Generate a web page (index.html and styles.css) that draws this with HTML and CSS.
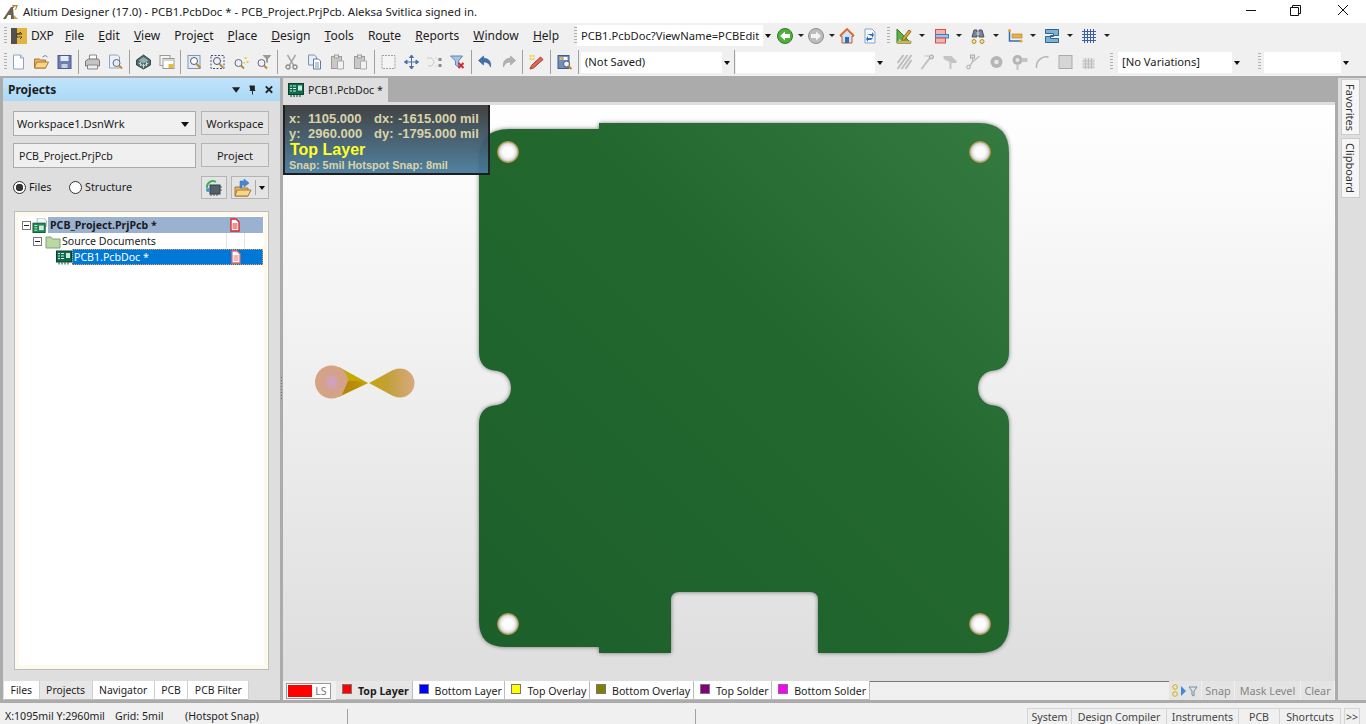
FILE: index.html
```html
<!DOCTYPE html>
<html lang="en">
<head>
    <meta charset="UTF-8">
    <title>Altium Designer (17.0) - PCB1.PcbDoc</title>
    <link rel="stylesheet" href="styles.css">
</head>
<body>
    <!-- icon sheet -->
    <svg class="sheet" width="0" height="0">
        <symbol id="i-new" viewBox="0 0 16 16"><path d="M3 1h7l3 3v11H3z" fill="#fff" stroke="#8ea3c4"/><path d="M10 1v3h3" fill="#dde6f3" stroke="#8ea3c4"/></symbol>
        <symbol id="i-open" viewBox="0 0 16 16"><path d="M1 5h5l1 1h5v8H1z" fill="#e9b765" stroke="#a87b2e"/><path d="M3 8h12l-3 6H1z" fill="#f8d48c" stroke="#a87b2e"/><path d="M9 3q3-3 5 0" fill="none" stroke="#6a86b0"/></symbol>
        <symbol id="i-save" viewBox="0 0 16 16"><rect x="1.500" y="1.500" width="13" height="13" fill="#6f7fb3" stroke="#4c5a8c"/><rect x="4" y="2" width="8" height="5" fill="#e8ecf5"/><rect x="5" y="10" width="6" height="4" fill="#c9cfdf"/></symbol>
        <symbol id="i-print" viewBox="0 0 16 16"><path d="M5 1h7v5H5z" fill="#fff" stroke="#888"/><path d="M1 7l3-2h10l1 2v5H1z" fill="#c4c4c4" stroke="#777"/><path d="M3 11h10v4H3z" fill="#eee" stroke="#888"/></symbol>
        <symbol id="i-preview" viewBox="0 0 16 16"><path d="M2 1h8l2 2v11H2z" fill="#eef2f8" stroke="#8ea3c4"/><circle cx="9" cy="9" r="3.500" fill="#dcecf8" stroke="#667"/><path d="M11.500 11.500l3 3" stroke="#c08a30" stroke-width="2"/></symbol>
        <symbol id="i-3d" viewBox="0 0 16 16"><path d="M8 1l7 5v5l-7 4-7-4V6z" fill="#4f6a6c" stroke="#3a4a4c"/><path d="M8 3l5 3.500-5 3-5-3z" fill="#8fb0ae"/><path d="M3 9l5 3 5-3M5 8v4M8 10v4M11 8v4" stroke="#cfd8d8" fill="none"/></symbol>
        <symbol id="i-sheets" viewBox="0 0 16 16"><rect x="1.500" y="1.500" width="10" height="10" fill="#f5f5f5" stroke="#9a9a9a"/><rect x="4.500" y="4.500" width="11" height="10" fill="#fff" stroke="#9a9a9a"/><rect x="10" y="10" width="5" height="4" fill="#e8b840"/><path d="M5 5h10v2H5z" fill="#d4d4d4"/></symbol>
        <symbol id="i-zoomfit" viewBox="0 0 16 16"><rect x="1.500" y="1.500" width="12" height="13" fill="#e4edf8" stroke="#7e94b8"/><circle cx="7.500" cy="7" r="3.500" fill="#fff" stroke="#556"/><path d="M10 10l4 4" stroke="#b98a36" stroke-width="2"/></symbol>
        <symbol id="i-zoomarea" viewBox="0 0 16 16"><rect x="1.500" y="1.500" width="13" height="13" fill="none" stroke="#3c4a8c" stroke-dasharray="2 1.500"/><circle cx="7.500" cy="7" r="3.500" fill="#eef" stroke="#556"/><path d="M10 10l3.500 3.500" stroke="#b98a36" stroke-width="2"/></symbol>
        <symbol id="i-zoomsel" viewBox="0 0 16 16"><circle cx="6" cy="9" r="3.500" fill="#eef" stroke="#667"/><path d="M8.500 11.500l3 3" stroke="#b98a36" stroke-width="2"/><path d="M12 3h2v2h-2zM14 7h2v2h-2zM11 8h1.500v1.500H11z" fill="#e5c94a"/></symbol>
        <symbol id="i-zoomfilter" viewBox="0 0 16 16"><circle cx="6" cy="9" r="3.500" fill="#eef" stroke="#667"/><path d="M8.500 11.500l3 3" stroke="#b98a36" stroke-width="2"/><path d="M7 1h9l-3.500 4v4L10.500 8V5z" fill="#9a9a9a"/></symbol>
        <symbol id="i-cut" viewBox="0 0 16 16"><path d="M4 1l6 10M12 1L6 11" stroke="#a8a8a8" stroke-width="1.500" fill="none"/><circle cx="4.500" cy="13" r="2" fill="none" stroke="#8a8a8a" stroke-width="1.300"/><circle cx="11.500" cy="13" r="2" fill="none" stroke="#8a8a8a" stroke-width="1.300"/></symbol>
        <symbol id="i-copy" viewBox="0 0 16 16"><path d="M2 1h6l2 2v8H2z" fill="#e8eef6" stroke="#7f93b2"/><path d="M7 5h5l2 2v8H7z" fill="#fff" stroke="#5d7aa4"/><path d="M8.500 9h4M8.500 11h4M8.500 13h4" stroke="#7f93b2"/></symbol>
        <symbol id="i-paste" viewBox="0 0 16 16"><rect x="2" y="2.500" width="10" height="12" fill="#c9c9c9" stroke="#9c9c9c"/><rect x="5" y="1" width="4" height="3" fill="#e4e4e4" stroke="#9c9c9c"/><path d="M8 7h6v8H8z" fill="#f2f2f2" stroke="#aaa"/></symbol>
        <symbol id="i-select" viewBox="0 0 16 16"><rect x="1.500" y="1.500" width="13" height="13" fill="#f4f4f4" stroke="#a0a0a0" stroke-dasharray="2 1"/></symbol>
        <symbol id="i-move" viewBox="0 0 16 16"><path d="M8 1v14M1 8h14M8 1l-2 2.500h4zM8 15l-2-2.500h4zM1 8l2.500-2v4zM15 8l-2.500-2v4z" fill="#4a6ea8" stroke="#4a6ea8"/></symbol>
        <symbol id="i-cross" viewBox="0 0 16 16"><path d="M1 4h4l3 4-3 4H1M9 4h1M9 12h1" fill="none" stroke="#b5b5b5" stroke-dasharray="2 1"/><path d="M12 4l3 0v3h-3zM12 10h3v3h-3z" fill="#8a8a8a"/></symbol>
        <symbol id="i-clearfilter" viewBox="0 0 16 16"><path d="M1 2h12L9 7v6L6 11V7z" fill="#a7c3e4" stroke="#5f86b8"/><path d="M9 9l5 5M14 9l-5 5" stroke="#cf2b2b" stroke-width="2"/></symbol>
        <symbol id="i-undo" viewBox="0 0 16 16"><path d="M6 2L1 6.500 6 11V8q5-.5 7 5 1.500-8-7-9z" fill="#3f6fae" stroke="#2d5488" stroke-width=".6"/></symbol>
        <symbol id="i-redo" viewBox="0 0 16 16"><path d="M10 2l5 4.500L10 11V8q-5-.5-7 5-1.500-8 7-9z" fill="#b2b2b2" stroke="#9a9a9a" stroke-width=".6"/></symbol>
        <symbol id="i-pencil" viewBox="0 0 16 16"><path d="M12 3l2.500 2.500L5 14l-3.500 1L3 11.500z" fill="#dc6a5a" stroke="#a83a30"/><path d="M1 1h2v2H1zM4 1h2v2H4zM1 4h2v2H1zM4 4h2v2H4z" fill="#f2d14a"/></symbol>
        <symbol id="i-library" viewBox="0 0 16 16"><rect x="1.500" y="1.500" width="11" height="13" fill="#6e8fbd" stroke="#3e5c8a"/><rect x="3" y="3" width="3" height="3" fill="#e8b840"/><rect x="7" y="3" width="4" height="3" fill="#fff"/><circle cx="10" cy="10" r="3" fill="#eef" stroke="#556"/><path d="M12 12l3 3" stroke="#b98a36" stroke-width="2"/></symbol>
        <symbol id="i-back" viewBox="0 0 16 16"><circle cx="8" cy="8" r="7.500" fill="#4fae3c" stroke="#2f7d23"/><path d="M3 8l5-4.500V6h5v4H8v2.500z" fill="#fff"/></symbol>
        <symbol id="i-forward" viewBox="0 0 16 16"><circle cx="8" cy="8" r="7.500" fill="#bdbdbd" stroke="#8f8f8f"/><path d="M13 8L8 3.500V6H3v4h5v2.500z" fill="#f5f5f5"/></symbol>
        <symbol id="i-home" viewBox="0 0 16 16"><path d="M8 1L1 8h2v7h10V8h2z" fill="#cfe2f6" stroke="#c65a26"/><path d="M1 8l7-7 7 7" fill="none" stroke="#d9682a" stroke-width="1.800"/><rect x="6" y="9" width="4" height="6" fill="#2f6db4"/></symbol>
        <symbol id="i-refresh" viewBox="0 0 16 16"><path d="M3 1h7l3 3v11H3z" fill="#f4f8fc" stroke="#8ea3c4"/><path d="M5 7h5V5l2 3-2 3V9zM11 11H6v-2l-2 3 2 3v-2h3" fill="#2f6db4" transform="translate(0 -1)"/></symbol>
        <symbol id="i-tools" viewBox="0 0 16 16"><path d="M1 1v14h14z" fill="#5fb04a" stroke="#2f7d23"/><path d="M3 11v2h2z" fill="#fff"/><path d="M6 11l7-9 2 1.500-7 9z" fill="#e0a93a" stroke="#8a6a1e"/><path d="M1 13h14v2H1z" fill="#e8c66a" stroke="#a37f2a" stroke-width=".6"/></symbol>
        <symbol id="i-align" viewBox="0 0 16 16"><rect x="2.500" y="1.500" width="10" height="5" fill="#f2b4b0" stroke="#d9504a"/><rect x="2.500" y="6.500" width="13" height="3.500" fill="#9cc4ea" stroke="#3f7fbe"/><rect x="2.500" y="10" width="10" height="5" fill="#f2b4b0" stroke="#d9504a"/></symbol>
        <symbol id="i-binoc" viewBox="0 0 16 16"><path d="M2 9l2-7h3v7zM14 9l-2-7H9v7z" fill="#7a8496" stroke="#4c5464"/><rect x="6.500" y="4" width="3" height="3" fill="#b8bfcc"/><circle cx="4" cy="13.500" r="2" fill="#f6e08e" stroke="#b58a2a"/><circle cx="12" cy="13.500" r="2" fill="#f6e08e" stroke="#b58a2a"/></symbol>
        <symbol id="i-dim" viewBox="0 0 16 16"><path d="M2.500 3v10h12" fill="none" stroke="#2f6db4" stroke-width="1.500"/><circle cx="2.500" cy="2.500" r="1.500" fill="#e8a030"/><circle cx="14" cy="13" r="1.500" fill="#e8a030"/><path d="M5 6h10v4H5z" fill="#eab04a" stroke="#a8752a" stroke-width=".6"/></symbol>
        <symbol id="i-stack" viewBox="0 0 16 16"><path d="M1.500 1.500h13v6h-8v3h8v4h-13v-6h8v-3h-8z" fill="#7cb1d8" stroke="#2f6390"/></symbol>
        <symbol id="i-grid" viewBox="0 0 16 16"><path d="M1 3.500h14M1 6.500h14M1 9.500h14M1 12.500h14M3.500 1v14M6.500 1v14M9.500 1v14M12.500 1v14" stroke="#3c5fa8"/></symbol>
        <symbol id="i-hatch" viewBox="0 0 16 16"><path d="M1 15L11 1M5 15L15 1M9 15l6-9M1 9l6-8" stroke="#bdbdbd" stroke-width="2" fill="none"/></symbol>
        <symbol id="i-route" viewBox="0 0 16 16"><path d="M2 15l9-12" stroke="#c0c0c0" stroke-width="2"/><circle cx="12" cy="3" r="2" fill="#ddd" stroke="#a5a5a5"/><path d="M5 2h5" stroke="#c0c0c0"/></symbol>
        <symbol id="i-fanout" viewBox="0 0 16 16"><path d="M1 2h8l5 5v2H9v6H7V8L1 5z" fill="#c4c4c4"/></symbol>
        <symbol id="i-diff" viewBox="0 0 16 16"><path d="M2 15l5-7V2M7 8l7-6" stroke="#c0c0c0" stroke-width="1.500" fill="none"/><circle cx="3" cy="13" r="1.800" fill="#eee" stroke="#aaa"/><rect x="5" y="1" width="4" height="3" fill="#ddd" stroke="#aaa"/></symbol>
        <symbol id="i-pad" viewBox="0 0 16 16"><circle cx="8" cy="8" r="6" fill="#b5b5b5"/><circle cx="8" cy="8" r="2.300" fill="#e8e8e8"/></symbol>
        <symbol id="i-via" viewBox="0 0 16 16"><circle cx="6" cy="6" r="5" fill="#b5b5b5"/><circle cx="6" cy="6" r="2" fill="#e8e8e8"/><path d="M10 4h6v4h-6zM5 10h2v6H5z" fill="#c4c4c4"/></symbol>
        <symbol id="i-arc" viewBox="0 0 16 16"><path d="M2 14A10 10 0 0 1 14 3" fill="none" stroke="#b5b5b5" stroke-width="1.500"/></symbol>
        <symbol id="i-fill" viewBox="0 0 16 16"><rect x="1.500" y="1.500" width="13" height="13" fill="#d6d6d6" stroke="#ababab"/></symbol>
        <symbol id="i-poly" viewBox="0 0 16 16"><path d="M2 4h12v11H2z" fill="#e2e2e2"/><path d="M2 7h12M2 10h12M2 13h12M5 4v11M8 4v11M11 4v11" stroke="#bdbdbd"/></symbol>
        <symbol id="i-pcb" viewBox="0 0 16 14"><rect x=".500" y=".500" width="15" height="11" fill="#0f6b4e" stroke="#09402f"/><path d="M2 3h2M2 5.500h2M2 8h2M5 3h3M5 5.500h3M5 8h3" stroke="#d8efe2"/><rect x="10" y="2.500" width="4" height="5" fill="#cfe6da"/><path d="M3 12v2M6 12v2M9 12v2M12 12v2" stroke="#09402f"/></symbol>
        <symbol id="i-project" viewBox="0 0 16 16"><path d="M5 0h7l3 3v6H5z" fill="#f4f6fa" stroke="#aab4c8"/><rect x=".500" y="5.500" width="13" height="10" fill="#1c8a52" stroke="#0c5a34"/><path d="M2 8h3M2 10.500h3M2 13h3" stroke="#d8efe2"/><rect x="7" y="8" width="5" height="5" fill="#d3eadd"/></symbol>
        <symbol id="i-folder" viewBox="0 0 16 14"><path d="M1 2.500h5l1.500 2H15v9H1z" fill="#b9d8a2" stroke="#7ea57a"/></symbol>
        <symbol id="i-docmark" viewBox="0 0 10 14"><path d="M1 1h5l3 3v9H1z" fill="#fff" stroke="currentColor" stroke-width="1.300"/><path d="M2.500 6h5M2.500 8h5M2.500 10h5" stroke="currentColor"/></symbol>
        <symbol id="i-refreshchip" viewBox="0 0 18 18"><rect x="5" y="6" width="10" height="9" fill="#54606a" stroke="#2f3a44"/><path d="M6 15v2M9 15v2M12 15v2M15 8h2M15 11h2" stroke="#555"/><path d="M2 9a6 6 0 0 1 9-6" fill="none" stroke="#3fae5a" stroke-width="2"/><circle cx="3" cy="11" r="2" fill="#4a8fd0"/></symbol>
        <symbol id="i-projmenu" viewBox="0 0 18 18"><path d="M1 8h6l1 1h6v8H1z" fill="#e9b765" stroke="#a87b2e"/><path d="M3 11h14l-3 6H1z" fill="#f8d48c" stroke="#a87b2e"/><path d="M6 9V2l4 0v-2l5 4-5 4V6H8v3z" fill="#4a86d0" stroke="#2f6db4" stroke-width=".5"/></symbol>
    </svg>

    <div class="app">
        <header class="titlebar">
            <svg class="logo" viewBox="0 0 16 16"><path d="M0 15L8 3h2l1 12H8V11H5l-2 4z" fill="#6b6256"/><path d="M9 1h3l-1 3h-1zM11 1h4l-2 5h-1l1-3z" fill="#b08a3c"/><path d="M11 11l4 4h-4z" fill="#caa34c"/></svg>
            <span class="title-text">Altium Designer (17.0) - PCB1.PcbDoc * - PCB_Project.PrjPcb. Aleksa Svitlica signed in.</span>
            <div class="window-controls">
                <svg viewBox="0 0 46 22"><path d="M18 9.500h10" stroke="#111"/></svg>
                <svg viewBox="0 0 46 22"><path d="M16.500 6.500h8v8h-8zM18.500 6.500v-2h8v8h-2" fill="none" stroke="#111"/></svg>
                <svg viewBox="0 0 46 22"><path d="M18 4l10 10M28 4L18 14" stroke="#111" fill="none"/></svg>
            </div>
        </header>

        <div class="toolbar toolbar-menu">
            <span class="grip"></span>
            <svg class="dxp-icon" viewBox="0 0 16 16"><rect width="16" height="16" fill="#e3b53c"/><rect width="6" height="16" fill="#55504a"/><path d="M6 6h5l-2-2v2h-3v3h5l-2 2" fill="#fff" stroke="#4a3a10"/></svg>
            <span class="dxp-label">DXP</span>
            <nav class="menu">
                <span class="menu-item"><u>F</u>ile</span>
                <span class="menu-item"><u>E</u>dit</span>
                <span class="menu-item"><u>V</u>iew</span>
                <span class="menu-item">Proje<u>c</u>t</span>
                <span class="menu-item"><u>P</u>lace</span>
                <span class="menu-item"><u>D</u>esign</span>
                <span class="menu-item"><u>T</u>ools</span>
                <span class="menu-item">Ro<u>u</u>te</span>
                <span class="menu-item"><u>R</u>eports</span>
                <span class="menu-item"><u>W</u>indow</span>
                <span class="menu-item"><u>H</u>elp</span>
            </nav>
            <span class="grip"></span>
            <div class="combo combo-path"><span class="combo-text">PCB1.PcbDoc?ViewName=PCBEdit</span><span class="combo-arrow"></span></div>
            <svg class="tool tool-first"><use href="#i-back"/></svg><span class="drop drop-nav"></span>
            <svg class="tool"><use href="#i-forward"/></svg><span class="drop drop-nav"></span>
            <svg class="tool"><use href="#i-home"/></svg>
            <svg class="tool tool-doc"><use href="#i-refresh"/></svg>
            <span class="grip grip-tools"></span>
            <svg class="tool"><use href="#i-tools"/></svg><span class="drop"></span>
            <svg class="tool"><use href="#i-align"/></svg><span class="drop"></span>
            <svg class="tool"><use href="#i-binoc"/></svg><span class="drop"></span>
            <svg class="tool"><use href="#i-dim"/></svg><span class="drop"></span>
            <svg class="tool"><use href="#i-stack"/></svg><span class="drop"></span>
            <svg class="tool"><use href="#i-grid"/></svg><span class="drop"></span>
        </div>

        <div class="toolbar toolbar-main">
            <span class="grip"></span>
            <svg class="btn"><use href="#i-new"/></svg>
            <svg class="btn"><use href="#i-open"/></svg>
            <svg class="btn"><use href="#i-save"/></svg>
            <span class="sep"></span>
            <svg class="btn"><use href="#i-print"/></svg>
            <svg class="btn"><use href="#i-preview"/></svg>
            <span class="sep"></span>
            <svg class="btn"><use href="#i-3d"/></svg>
            <svg class="btn"><use href="#i-sheets"/></svg>
            <span class="sep"></span>
            <svg class="btn"><use href="#i-zoomfit"/></svg>
            <svg class="btn"><use href="#i-zoomarea"/></svg>
            <svg class="btn"><use href="#i-zoomsel"/></svg>
            <svg class="btn"><use href="#i-zoomfilter"/></svg>
            <span class="sep"></span>
            <svg class="btn"><use href="#i-cut"/></svg>
            <svg class="btn"><use href="#i-copy"/></svg>
            <svg class="btn"><use href="#i-paste"/></svg>
            <svg class="btn"><use href="#i-paste"/></svg>
            <span class="sep"></span>
            <svg class="btn"><use href="#i-select"/></svg>
            <svg class="btn"><use href="#i-move"/></svg>
            <svg class="btn"><use href="#i-cross"/></svg>
            <svg class="btn"><use href="#i-clearfilter"/></svg>
            <span class="sep"></span>
            <svg class="btn"><use href="#i-undo"/></svg>
            <svg class="btn"><use href="#i-redo"/></svg>
            <span class="sep"></span>
            <svg class="btn"><use href="#i-pencil"/></svg>
            <span class="sep"></span>
            <svg class="btn"><use href="#i-library"/></svg>
            <span class="sep"></span>
            <div class="combo combo-saved"><span class="combo-text">(Not Saved)</span><span class="combo-arrow"></span></div>
            <span class="sep sep-tight"></span>
            <div class="combo combo-blank"><span class="combo-text"></span><span class="combo-arrow"></span></div>
            <span class="gap-route"></span>
            <svg class="btn"><use href="#i-hatch"/></svg>
            <svg class="btn"><use href="#i-route"/></svg>
            <svg class="btn"><use href="#i-fanout"/></svg>
            <svg class="btn"><use href="#i-diff"/></svg>
            <svg class="btn"><use href="#i-pad"/></svg>
            <svg class="btn"><use href="#i-via"/></svg>
            <svg class="btn"><use href="#i-arc"/></svg>
            <svg class="btn"><use href="#i-fill"/></svg>
            <svg class="btn"><use href="#i-poly"/></svg>
            <span class="grip grip-var"></span>
            <div class="combo combo-variation"><span class="combo-text">[No Variations]</span><span class="combo-arrow"></span></div>
            <span class="grip grip-last"></span>
            <div class="combo combo-last"><span class="combo-text"></span><span class="combo-arrow"></span></div>
        </div>

        <main class="workspace">
            <!-- Projects panel -->
            <aside class="panel">
                <div class="panel-head">
                    <span class="panel-title">Projects</span>
                    <svg class="panel-icons" viewBox="0 0 46 12">
                        <path d="M0 3h9L4.500 9z" fill="#222"/>
                        <path d="M19 1h6v5l1 1h-3v4h-1V7h-3l1-1z" fill="#222"/>
                        <path d="M37 2l7 7M44 2l-7 7" stroke="#222" stroke-width="2"/>
                    </svg>
                </div>
                <div class="panel-body">
                    <div class="panel-form">
                        <div class="field field-select">Workspace1.DsnWrk<span class="select-arrow"></span></div>
                        <div class="panel-btn">Workspace</div>
                        <div class="field field-project">PCB_Project.PrjPcb</div>
                        <div class="panel-btn">Project</div>
                    </div>
                    <div class="view-row">
                        <span class="radio radio-on"></span><span class="radio-label radio-files">Files</span>
                        <span class="radio"></span><span class="radio-label">Structure</span>
                        <div class="view-btn"><svg><use href="#i-refreshchip"/></svg></div>
                        <div class="view-btn view-btn-split"><svg><use href="#i-projmenu"/></svg><span class="split-arrow"></span></div>
                    </div>
                    <div class="tree">
                        <div class="tree-row tree-project">
                            <span class="expander"></span>
                            <svg class="tree-icon"><use href="#i-project"/></svg>
                            <span class="tree-label">PCB_Project.PrjPcb *<svg class="doc-mark"><use href="#i-docmark"/></svg></span>
                        </div>
                        <div class="tree-row tree-folder">
                            <span class="expander"></span>
                            <svg class="tree-icon"><use href="#i-folder"/></svg>
                            <span class="tree-label">Source Documents<span class="cell cell-a"></span><span class="cell cell-b"></span></span>
                        </div>
                        <div class="tree-row tree-doc">
                            <svg class="tree-icon"><use href="#i-pcb"/></svg>
                            <span class="tree-label">PCB1.PcbDoc *<svg class="doc-mark"><use href="#i-docmark"/></svg></span>
                        </div>
                    </div>
                </div>
                <div class="panel-tabs">
                    <span class="panel-tab">Files</span>
                    <span class="panel-tab panel-tab-on">Projects</span>
                    <span class="panel-tab">Navigator</span>
                    <span class="panel-tab">PCB</span>
                    <span class="panel-tab">PCB Filter</span>
                </div>
            </aside>

            <span class="splitter"></span>

            <!-- PCB document -->
            <section class="document">
                <div class="doc-tabs">
                    <div class="doc-tab"><svg><use href="#i-pcb"/></svg>PCB1.PcbDoc *</div>
                </div>
                <div class="canvas">
                    <svg class="board" viewBox="283 105 1052 572">
                        <defs>
                            <linearGradient id="bg" x1="0" y1="0" x2="0" y2="1">
                                <stop offset="0" stop-color="#ffffff"/>
                                <stop offset="1" stop-color="#dedede"/>
                            </linearGradient>
                            <linearGradient id="green" x1="1" y1="0" x2="0" y2="1">
                                <stop offset="0" stop-color="#357a41"/>
                                <stop offset=".4" stop-color="#23682f"/>
                                <stop offset="1" stop-color="#1d5f2b"/>
                            </linearGradient>
                            <radialGradient id="hole">
                                <stop offset="0" stop-color="#ffffff"/>
                                <stop offset=".5" stop-color="#fbfbfb"/>
                                <stop offset=".8" stop-color="#dcdcdc"/>
                                <stop offset="1" stop-color="#8c8c8c"/>
                            </radialGradient>
                            <radialGradient id="padL">
                                <stop offset="0" stop-color="#cfa0d2"/>
                                <stop offset=".5" stop-color="#d3a28e"/>
                                <stop offset="1" stop-color="#d6a380"/>
                            </radialGradient>
                            <linearGradient id="padR" gradientUnits="userSpaceOnUse" x1="369" y1="0" x2="415" y2="0">
                                <stop offset="0" stop-color="#c4a806"/>
                                <stop offset=".4" stop-color="#c2a038"/>
                                <stop offset="1" stop-color="#d8a982"/>
                            </linearGradient>
                            <linearGradient id="padTip" gradientUnits="userSpaceOnUse" x1="342" y1="0" x2="368" y2="0">
                                <stop offset="0" stop-color="#b5800f"/>
                                <stop offset=".6" stop-color="#bb900c"/>
                                <stop offset="1" stop-color="#c4a806"/>
                            </linearGradient>
                        </defs>
                        <rect x="283" y="105" width="1052" height="572" fill="url(#bg)"/>

                        <path class="outline" fill="url(#green)" d="M509 129H599V123H979Q1009 123 1009 153V352C1009 364 1002 370 994 370.500C985 371 978 378 978 388C978 398 985 405 994 405.500C1002 406 1009 412 1009 424V623Q1009 653 979 653H818V600Q818 592 810 592H679Q671 592 671 600V653H599V647H505Q479 647 479 621V424C479 412 486 406 494 405.500C504 405 511 398 511 388C511 378 504 371 494 370.500C486 370 479 364 479 352V159Q479 129 509 129Z"/>

                        <g class="holes">
                            <circle cx="508" cy="152" r="10.500"/>
                            <circle cx="980" cy="152" r="10.500"/>
                            <circle cx="508" cy="624" r="10.500"/>
                            <circle cx="980" cy="624" r="10.500"/>
                        </g>

                        <path d="M339 367L368 383 339 397Z" fill="#c4a806"/>
                        <circle cx="331.500" cy="382" r="16.500" fill="url(#padL)"/>
                        <path d="M348 381H358L368 383 342 395Z" fill="url(#padTip)"/>
                        <path d="M369 383L393 370V396Z" fill="url(#padR)"/>
                        <circle cx="400" cy="383" r="14.500" fill="url(#padR)"/>
                    </svg>

                    <div class="hud">
                        <div class="hud-row"><span class="hud-a">x:</span><span class="hud-b">1105.000</span><span class="hud-c">dx:</span><span class="hud-d">-1615.000</span><span>mil</span></div>
                        <div class="hud-row"><span class="hud-a">y:</span><span class="hud-b">2960.000</span><span class="hud-c">dy:</span><span class="hud-d">-1795.000</span><span>mil</span></div>
                        <div class="hud-layer">Top Layer</div>
                        <div class="hud-snap">Snap: 5mil Hotspot Snap: 8mil</div>
                    </div>
                </div>
                <div class="layer-bar">
                    <div class="ls-box"><span class="ls-swatch"></span><span class="ls-text">LS</span></div>
                    <span class="layer-tab layer-tab-on"><i class="swatch swatch-red"></i>Top Layer</span>
                    <span class="layer-tab"><i class="swatch swatch-blue"></i>Bottom Layer</span>
                    <span class="layer-tab"><i class="swatch swatch-yellow"></i>Top Overlay</span>
                    <span class="layer-tab"><i class="swatch swatch-olive"></i>Bottom Overlay</span>
                    <span class="layer-tab"><i class="swatch swatch-purple"></i>Top Solder</span>
                    <span class="layer-tab"><i class="swatch swatch-pink"></i>Bottom Solder</span>
                    <span class="layer-fill"></span>
                    <div class="layer-tools">
                        <div class="layer-btn layer-btn-icons">
                            <svg viewBox="0 0 28 18"><circle cx="4" cy="5" r="2.300" fill="none" stroke="#d4b000"/><circle cx="4" cy="12" r="2.300" fill="none" stroke="#d4b000"/><path d="M10 4l5 5-5 5z" fill="#3f8ad8"/><path d="M18 5h8l-3 4v5l-2-1V9z" fill="none" stroke="#6f8fa8"/></svg>
                        </div>
                        <span class="layer-btn layer-btn-snap">Snap</span>
                        <span class="layer-btn layer-btn-mask">Mask Level</span>
                        <span class="layer-btn layer-btn-clear">Clear</span>
                    </div>
                </div>
            </section>

            <!-- Side dock -->
            <aside class="dock">
                <span class="dock-tab dock-fav">Favorites</span>
                <span class="dock-tab dock-clip">Clipboard</span>
            </aside>
        </main>

        <footer class="statusbar">
            <span class="status-pos">X:1095mil Y:2960mil</span>
            <span class="status-grid">Grid: 5mil</span>
            <span class="status-snap">(Hotspot Snap)</span>
            <span class="status-sep"></span>
            <span class="status-gap"></span>
            <span class="status-sep"></span>
            <div class="status-buttons">
                <span class="status-btn status-system">System</span>
                <span class="status-btn status-compiler">Design Compiler</span>
                <span class="status-btn status-instruments">Instruments</span>
                <span class="status-btn status-pcb">PCB</span>
                <span class="status-btn status-shortcuts">Shortcuts</span>
                <span class="status-btn status-more">&gt;&gt;</span>
            </div>
        </footer>
    </div>
</body>
</html>
```

FILE: styles.css
```css
* {
    box-sizing: border-box;
}
body {
    margin: 0;
    font-family: "Noto Sans", "Liberation Sans", sans-serif;
    font-size: 10.6px;
    color: #1c1c1c;
    background-color: #ababab;
    overflow: hidden;
}
.sheet {
    position: absolute;
}
.app {
    width: 1366px;
    height: 724px;
    display: flex;
    flex-direction: column;
}

/* title bar */
.titlebar {
    height: 23px;
    display: flex;
    align-items: center;
    background-color: #fff;
    padding-left: 3px;
}
.logo {
    width: 16px;
    height: 16px;
    margin-right: 4px;
}
.title-text {
    font-size: 11.4px;
    color: #222;
}
.window-controls {
    margin-left: auto;
    display: flex;
}
.window-controls svg {
    width: 46px;
    height: 22px;
}

/* toolbars */
.toolbar {
    display: flex;
    align-items: center;
    background-color: #f0f0f0;
}
.toolbar-menu {
    height: 25px;
    padding-left: 4px;
}
.toolbar-main {
    height: 28px;
    padding-left: 4px;
}
.toolbar-main .combo-text {
    padding-bottom: 2px;
}
.grip {
    width: 3px;
    height: 18px;
    flex: none;
    background-image: repeating-linear-gradient(#b0b0b0 0 1px, transparent 1px 3px);
}
.dxp-icon {
    width: 16px;
    height: 16px;
    margin-left: 4px;
}
.dxp-label {
    margin-left: 4px;
    font-size: 12px;
    width: 34px;
}
.menu {
    display: flex;
    font-size: 12px;
    width: 509px;
    flex: none;
}
.menu-item {
    padding-right: 14.1px;
}
.combo {
    display: flex;
    align-items: center;
    height: 21px;
    flex: none;
    background-color: #fff;
    font-size: 11.2px;
}
.combo-text {
    flex: 1;
    padding-left: 4px;
    white-space: nowrap;
    overflow: hidden;
}
.combo-arrow {
    width: 10px;
    height: 100%;
    background-color: #f0f0f0;
    position: relative;
}
.combo-arrow::after {
    content: "";
    position: absolute;
    left: 2px;
    top: 9px;
    border: 3px solid transparent;
    border-top: 4px solid #111;
    border-bottom: none;
}
.combo-path {
    width: 196px;
}
.tool {
    width: 16px;
    height: 16px;
    flex: none;
}
.tool-first {
    margin-left: 4px;
}
.tool-doc {
    margin-left: 7px;
}
.drop {
    width: 0;
    height: 0;
    flex: none;
    margin: 0 8px 0 7px;
    border: 3px solid transparent;
    border-top: 3px solid #222;
    border-bottom: none;
}
.drop-nav {
    margin: 0 4px 0 5px;
}
.grip-tools {
    margin: 0 6px 0 9px;
}
.btn {
    width: 23px;
    height: 16px;
    flex: none;
}
.sep {
    width: 1px;
    height: 24px;
    flex: none;
    margin: 0 2px;
    background-color: #a0a0a0;
}
.sep-tight {
    margin: 0 1px 0 2px;
}
.combo-saved {
    width: 151px;
}
.combo-blank {
    width: 149px;
}
.gap-route {
    width: 8px;
    flex: none;
}
.grip-var {
    margin: 0 5px 0 10px;
}
.combo-variation {
    width: 124px;
}
.grip-last {
    margin: 0 3px 0 16px;
}
.combo-last {
    width: 87px;
}

/* workspace */
.workspace {
    flex: 1;
    display: flex;
    min-height: 0;
    padding-top: 2px;
    background-color: #ababab;
}

/* projects panel */
.panel {
    width: 277px;
    margin-left: 3px;
    display: flex;
    flex-direction: column;
    background-color: #dedede;
    flex: none;
}
.panel-head {
    height: 23px;
    display: flex;
    align-items: center;
    justify-content: space-between;
    padding: 0 6px 0 5px;
    background: linear-gradient(#c2e4fb, #aad8f6);
}
.panel-title {
    font-size: 12px;
    font-weight: 700;
    padding-bottom: 1px;
}
.panel-icons {
    width: 42px;
    height: 12px;
}
.panel-body {
    flex: 1;
    display: flex;
    flex-direction: column;
    padding: 10px 11px 11px 10px;
    min-height: 0;
}
.panel-form {
    display: grid;
    grid-template-columns: 183px 68px;
    grid-auto-rows: 25px;
    column-gap: 5px;
    row-gap: 7px;
}
.field {
    display: flex;
    align-items: center;
    padding-left: 3px;
    background-color: #f0f0f0;
    border: 1px solid #ababab;
    font-size: 11.1px;
    position: relative;
}
.field-project {
    padding-left: 5px;
    font-size: 10.6px;
}
.select-arrow {
    position: absolute;
    right: 6px;
    top: 10px;
    border: 4px solid transparent;
    border-top: 5px solid #111;
    border-bottom: none;
}
.panel-btn {
    display: flex;
    align-items: center;
    justify-content: center;
    background-color: #e4e4e4;
    border: 1px solid #b4b4b4;
    font-size: 11.1px;
    margin-bottom: 1px;
}
.view-row {
    display: flex;
    align-items: center;
    margin-top: 8px;
    height: 23px;
}
.radio {
    width: 13px;
    height: 13px;
    flex: none;
    border: 1px solid #333;
    border-radius: 50%;
    background-color: #fff;
}
.radio-on {
    background: radial-gradient(circle, #333 0 3.500px, #fff 4px);
}
.radio-label {
    margin-left: 3px;
    font-size: 10.8px;
    padding-bottom: 2px;
}
.radio-files {
    width: 40px;
}
.view-btn {
    width: 26px;
    height: 23px;
    margin-left: auto;
    display: flex;
    align-items: center;
    justify-content: center;
    background-color: #e4e4e4;
    border: 1px solid #b4b4b4;
}
.view-btn svg {
    width: 18px;
    height: 18px;
}
.view-btn-split {
    width: 38px;
    margin-left: 4px;
    justify-content: flex-start;
    padding-left: 2px;
    position: relative;
}
.view-btn-split::after {
    content: "";
    position: absolute;
    right: 12px;
    top: 3px;
    bottom: 3px;
    width: 1px;
    background-color: #a8a8a8;
}
.split-arrow {
    position: absolute;
    right: 3px;
    top: 9px;
    border: 3px solid transparent;
    border-top: 4px solid #111;
    border-bottom: none;
}
.tree {
    flex: 1;
    margin-top: 12px;
    margin-left: 1px;
    padding: 5px 5px 0 0;
    background-color: #fff;
    border: 1px solid #bdbdbd;
    box-shadow: inset 0 0 0 4px #fdf9ec;
}
.tree-row {
    height: 16px;
    display: flex;
    align-items: center;
    position: relative;
}
.expander {
    width: 9px;
    height: 9px;
    flex: none;
    border: 1px solid #777;
    background: linear-gradient(#222, #222) center / 5px 1px no-repeat #fff;
}
.tree-icon {
    width: 16px;
    height: 15px;
    flex: none;
}
.tree-label {
    flex: 1;
    height: 100%;
    display: flex;
    align-items: center;
    position: relative;
    white-space: nowrap;
    padding-bottom: 1px;
}
.tree-project {
    padding-left: 7px;
}
.tree-project .tree-icon {
    margin-left: 1px;
}
.tree-project .tree-label {
    background-color: #9ab2d0;
    font-weight: 700;
    padding-left: 2px;
}
.tree-folder {
    padding-left: 18px;
}
.tree-folder .tree-icon {
    margin-left: 3px;
}
.tree-folder .tree-label {
    padding-left: 1px;
}
.tree-doc {
    padding-left: 41px;
}
.tree-doc .tree-label {
    background-color: #0078d7;
    color: #fff;
    padding-left: 2px;
    outline: 1px dotted #e0a050;
    outline-offset: -1px;
}
.doc-mark {
    width: 10px;
    height: 14px;
    position: absolute;
    left: 182px;
    top: 1px;
    color: #e02020;
}
.tree-doc .doc-mark {
    left: 159px;
    color: #e56b6b;
}
.cell {
    position: absolute;
    top: 0;
    bottom: 0;
    width: 1px;
    background-color: #e4e4e4;
}
.cell-a {
    left: 165px;
}
.cell-b {
    left: 183px;
}
.panel-tabs {
    height: 19px;
    display: flex;
    padding-left: 1px;
}
.panel-tab {
    display: flex;
    align-items: center;
    padding: 0 6.5px;
    background-color: #fff;
    border-right: 1px solid #cfcfcf;
    border-bottom: 1px solid #bbb;
    font-size: 10.4px;
}
.panel-tab-on {
    background-color: #e6e6e6;
}

/* splitter */
.splitter {
    width: 3px;
    flex: none;
    background: repeating-linear-gradient(#777 0 1px, transparent 1px 3px) center / 1px 24px no-repeat;
}

/* document area */
.document {
    width: 1052px;
    flex: none;
    display: flex;
    flex-direction: column;
}
.doc-tabs {
    height: 24px;
    flex: none;
}
.doc-tab {
    width: 105px;
    height: 24px;
    display: flex;
    align-items: center;
    padding-left: 5px;
    background-color: #dedede;
    white-space: nowrap;
}
.doc-tab svg {
    width: 16px;
    height: 14px;
    margin-right: 4px;
}
.canvas {
    flex: 1;
    min-height: 0;
    position: relative;
    border-top: 3px solid #dedede;
    border-bottom: 4px solid #dedede;
}
.board {
    display: block;
    width: 100%;
    height: 100%;
}
.outline {
    filter: drop-shadow(0 0 2px rgba(0, 0, 0, .5));
}
.holes circle {
    fill: url(#hole);
    stroke: #c9a820;
    stroke-width: .8;
}
.hud {
    position: absolute;
    left: 0;
    top: 0;
    width: 207px;
    height: 70px;
    padding: 6px 3px 0 4px;
    border: 2px solid rgba(25, 25, 25, .9);
    border-top-width: 0;
    background: linear-gradient(rgba(58, 58, 58, .96), rgba(70, 122, 155, .94));
    color: #d9d4a8;
    font-family: "Liberation Sans", Arial, sans-serif;
    font-size: 13px;
    font-weight: 700;
    line-height: 15px;
}
.hud-row {
    display: flex;
    white-space: nowrap;
}
.hud-a {
    width: 19px;
}
.hud-b {
    width: 66px;
}
.hud-c {
    width: 24px;
}
.hud-d {
    width: 62px;
}
.hud-layer {
    color: #ffff28;
    font-size: 16px;
    line-height: 18px;
    margin-left: 1px;
}
.hud-snap {
    font-size: 11px;
    line-height: 13px;
}

/* layer tabs */
.layer-bar {
    height: 19px;
    flex: none;
    display: flex;
    align-items: stretch;
    background-color: #f0f0f0;
    padding-left: 3px;
}
.ls-box {
    width: 45px;
    margin: 2px 5px 1px 0;
    display: flex;
    border: 1px solid #9a9a9a;
    background-color: #fff;
}
.ls-swatch {
    width: 24px;
    background-color: #ff0000;
    margin: 1px 0 1px 1px;
}
.ls-text {
    flex: 1;
    text-align: center;
    color: #777;
    font-size: 10.5px;
    line-height: 14px;
}
.layer-tab {
    display: flex;
    align-items: center;
    padding: 1px 2.7px 0 6px;
    background-color: #fff;
    border-right: 1px solid #bdbdbd;
    border-bottom: 1px solid #bbb;
    white-space: nowrap;
}
.layer-tab-on {
    background-color: #e6e6e6;
    font-weight: 700;
}
.swatch {
    width: 10px;
    height: 10px;
    margin-right: 6px;
    margin-top: -3px;
    border: 1px solid #777;
}
.swatch-red {
    background-color: #ff0000;
}
.swatch-blue {
    background-color: #0000ff;
}
.swatch-yellow {
    background-color: #ffff00;
}
.swatch-olive {
    background-color: #808000;
}
.swatch-purple {
    background-color: #800080;
}
.swatch-pink {
    background-color: #ff00ff;
}
.layer-fill {
    flex: 1;
    border-top: 1px solid #777;
}
.layer-tools {
    display: flex;
    gap: 1px;
    padding-right: 1px;
}
.layer-btn {
    display: flex;
    align-items: center;
    justify-content: center;
    background-color: #e4e4e4;
    color: #858585;
    font-size: 10.8px;
}
.layer-btn-icons {
    width: 32px;
}
.layer-btn-icons svg {
    width: 28px;
    height: 18px;
}
.layer-btn-snap {
    width: 32px;
}
.layer-btn-mask {
    width: 65px;
}
.layer-btn-clear {
    width: 33px;
}

/* side dock */
.dock {
    width: 28px;
    margin-left: 3px;
    flex: none;
    display: flex;
    flex-direction: column;
    align-items: flex-start;
    gap: 3px;
    padding: 1px 0 0 3px;
    background-color: #dedede;
}
.dock-tab {
    writing-mode: vertical-rl;
    width: 19px;
    display: flex;
    align-items: center;
    justify-content: center;
    background-color: #f6f6f6;
    border: 1px solid #ccc;
    font-size: 11px;
    color: #333;
}
.dock-fav {
    height: 56px;
}
.dock-clip {
    height: 60px;
}

/* status bar */
.statusbar {
    height: 21px;
    margin-top: 3px;
    flex: none;
    display: flex;
    align-items: flex-end;
    background-color: #f0f0f0;
}
.statusbar > span {
    line-height: 15px;
}
.status-pos {
    margin-left: 5px;
    width: 110px;
}
.status-grid {
    width: 70px;
}
.status-snap {
    width: 162px;
}
.status-sep {
    width: 1px;
    height: 15px;
    background-color: #a0a0a0;
}
.status-gap {
    width: 347px;
}
.status-buttons {
    margin-left: auto;
    height: 16px;
    display: flex;
    padding-right: 6px;
}
.status-btn {
    display: flex;
    align-items: center;
    justify-content: center;
    background-color: #f0f0f0;
    border: 1px solid #d4d4d4;
    border-right-width: 0;
    border-bottom-width: 0;
    color: #444;
}
.status-system {
    width: 44px;
}
.status-compiler {
    width: 95px;
}
.status-instruments {
    width: 72px;
}
.status-pcb {
    width: 41px;
}
.status-shortcuts {
    width: 62px;
    border-right-width: 1px;
}
.status-more {
    width: 16px;
    margin-left: 3px;
    border-right-width: 1px;
}
```
